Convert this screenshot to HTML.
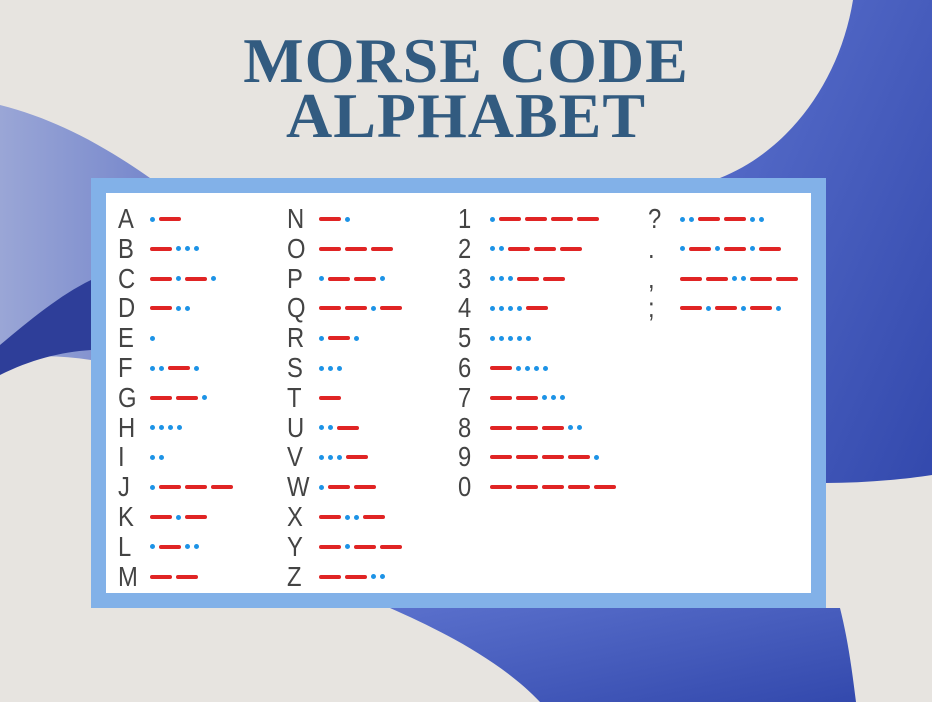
<!DOCTYPE html>
<html><head><meta charset="utf-8"><style>
html,body{margin:0;padding:0}
body{width:932px;height:702px;overflow:hidden;background:#e7e4e0;position:relative;font-family:"Liberation Sans",sans-serif}
svg.bg{position:absolute;left:0;top:0}
h1{position:absolute;left:0;width:932px;top:33px;margin:0;text-align:center;font-family:"Liberation Serif",serif;font-weight:bold;color:#325b80;font-size:64px;line-height:55px;letter-spacing:1px}
.box{position:absolute;left:91px;top:178px;width:705px;height:400px;border:15px solid #82b1e8;background:#fff}
.row{position:absolute;height:30px;display:flex;align-items:center}
.ch{width:32px;font-size:28px;color:#444;font-family:"Liberation Sans",sans-serif;text-align:left;transform:scaleX(.85);transform-origin:left center}
.m{display:flex;align-items:center}
.d{width:5px;height:5px;border-radius:50%;background:#1d93e6;margin-right:4px}
.l{width:22px;height:4px;border-radius:2px;background:#e02424;margin-right:4px}
</style></head><body>
<svg class="bg" width="932" height="702">
<defs><linearGradient id="g" x1="0" y1="0" x2="1" y2="1"><stop offset="0" stop-color="#5a70cc"/><stop offset="1" stop-color="#3349ad"/></linearGradient>
<linearGradient id="g2" x1="0" y1="0" x2="1" y2="0"><stop offset="0" stop-color="#9aa6d6"/><stop offset="1" stop-color="#7788cc"/></linearGradient></defs>
<path d="M853 0 L932 0 L932 475 C900 480 860 483 826 483 L826 178 L720 178 C790 150 840 80 853 0Z" fill="url(#g)"/>
<path d="M390 608 L840 608 C848 640 852 670 856 702 L540 702 C500 660 440 630 390 608Z" fill="url(#g)"/>
<path d="M0 105 C60 120 110 150 150 178 L91 178 L91 360 C60 355 30 355 0 360Z" fill="url(#g2)"/>
<path d="M0 345 C30 320 60 295 91 280 L91 350 C60 352 30 360 0 375Z" fill="#2e3e99"/>
</svg>
<h1>MORSE CODE<br>ALPHABET</h1>
<div class="box"></div>
<div id="rows"></div>
<script>
var cols=[
[118,[["A",".-"],["B","-..."],["C","-.-."],["D","-.."],["E","."],["F","..-."],["G","--."],["H","...."],["I",".."],["J",".---"],["K","-.-"],["L",".-.."],["M","--"]]],
[287,[["N","-."],["O","---"],["P",".--."],["Q","--.-"],["R",".-."],["S","..."],["T","-"],["U","..-"],["V","...-"],["W",".--"],["X","-..-"],["Y","-.--"],["Z","--.."]]],
[458,[["1",".----"],["2","..---"],["3","...--"],["4","....-"],["5","....."],["6","-...."],["7","--..."],["8","---.."],["9","----."],["0","-----"]]],
[648,[["?","..--.."],[".",".-.-.-"],[",","--..--"],[";","-.-.-."]]]];
var h="";
cols.forEach(function(c){c[1].forEach(function(r,i){
var m="";for(var k=0;k<r[1].length;k++)m+=r[1][k]=="."?'<i class="d"></i>':'<i class="l"></i>';
h+='<div class="row" style="left:'+c[0]+'px;top:'+(204+i*29.8)+'px"><span class="ch">'+r[0]+'</span><span class="m">'+m+'</span></div>';});});
document.getElementById("rows").innerHTML=h;
</script>
</body></html>
